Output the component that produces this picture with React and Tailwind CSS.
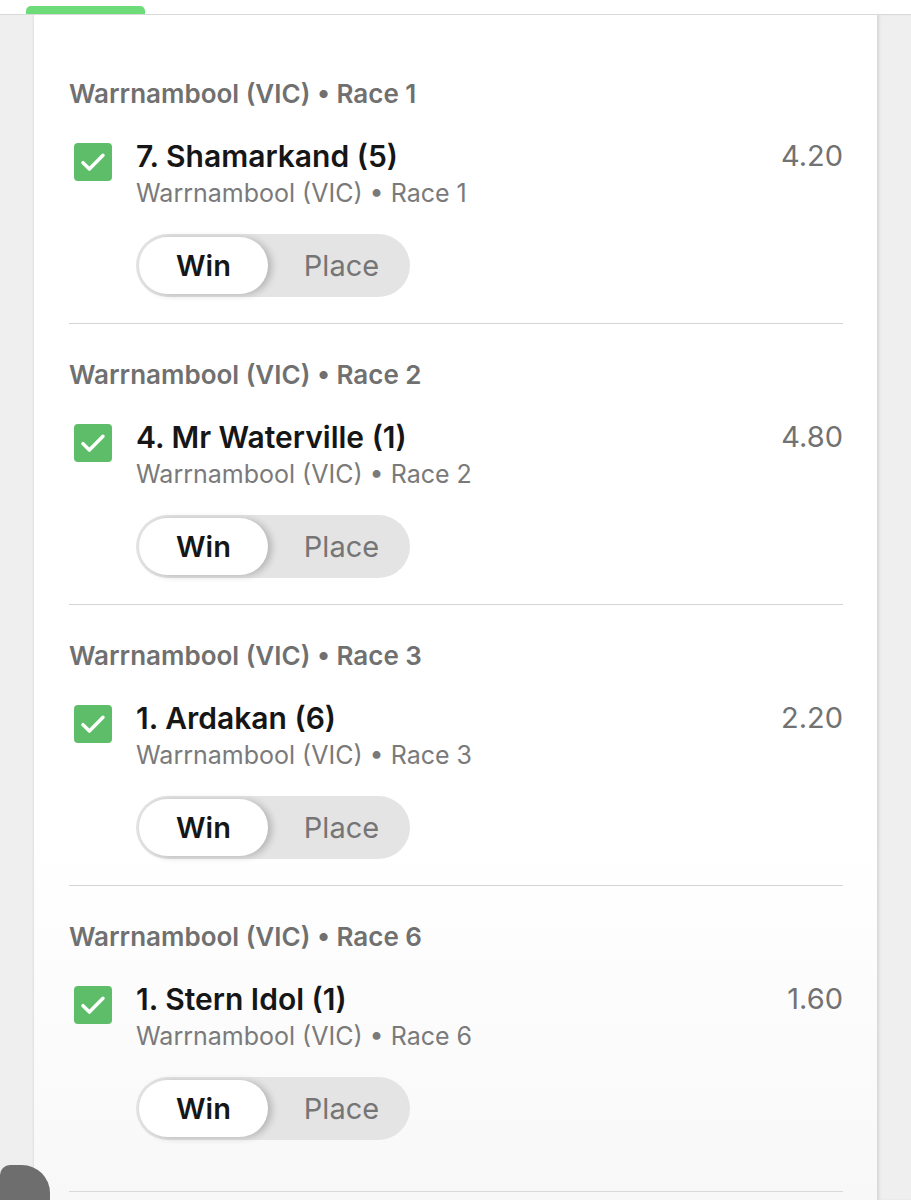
import React from 'react';

const selections = [
  { race: 'Race 1', runner: '7. Shamarkand (5)', price: '4.20' },
  { race: 'Race 2', runner: '4. Mr Waterville (1)', price: '4.80' },
  { race: 'Race 3', runner: '1. Ardakan (6)', price: '2.20' },
  { race: 'Race 6', runner: '1. Stern Idol (1)', price: '1.60' },
];

const CheckBox = () => (
  <div className="mt-[3px] flex h-[38px] w-[38px] shrink-0 items-center justify-center rounded-[4px] bg-[#5dbd68]">
    <svg width="32" height="32" viewBox="0 0 24 24" fill="none">
      <path d="M4.5 12.5l4.8 4.8L19.5 7" stroke="white" strokeWidth="2.6" strokeLinecap="round" strokeLinejoin="round" />
    </svg>
  </div>
);

const BetTypeToggle = () => (
  <div className="relative mt-[26px] flex h-[63px] w-[274px] items-center rounded-full bg-[#e4e4e4] p-[3px]">
    <div className="flex h-[57px] w-[129px] items-center justify-center rounded-full bg-white text-[29px] font-semibold text-[#161616] shadow-[4px_1px_7px_rgba(0,0,0,0.2)]">
      Win
    </div>
    <div className="flex flex-1 items-center justify-center pl-[8px] text-[29px] text-[#757575]">Place</div>
  </div>
);

const Selection = ({ item, first, last }) => (
  <div
    className={`border-b border-[#d4d4d4] ${first ? 'pt-[65px]' : 'pt-[37px]'} ${last ? 'pb-[51px] border-[#d9d9d9]' : 'pb-[26px]'}`}
  >
    <div className="text-[26px] font-semibold leading-[28px] text-[#707070]">
      Warrnambool (VIC) • {item.race}
    </div>
    <div className="mt-[32px] flex items-start">
      <div className="ml-[5px]">
        <CheckBox />
      </div>
      <div className="ml-[24px] flex-1">
        <div className="flex items-start justify-between">
          <div className="text-[30px] font-semibold leading-[32px] text-[#161616]">{item.runner}</div>
          <div className="text-[29px] leading-[32px] text-[#727272]">{item.price}</div>
        </div>
        <div className="mt-[6px] text-[25px] leading-[30px] text-[#7a7a7a]">
          Warrnambool (VIC) • {item.race}
        </div>
        <BetTypeToggle />
      </div>
    </div>
  </div>
);

export default function App() {
  return (
    <div className="relative h-[1200px] w-[911px] overflow-hidden bg-[#efefef] font-['Inter',sans-serif]">
      {/* top strip with active tab indicator */}
      <div className="relative h-[15px] border-b border-[#d9d9d9] bg-white">
        <div className="absolute bottom-0 left-[26px] h-[8px] w-[119px] rounded-t-[5px] bg-[#6ddc78]" />
      </div>

      <div className="flex">
        <div className="w-[34px] shrink-0" />
        <div className="h-[1185px] w-[843px] bg-gradient-to-b from-white from-[70%] to-[#f8f8f8] px-[35px] pr-[34px] shadow-[0_0_3px_rgba(0,0,0,0.12)]">
          {selections.map((item, i) => (
            <Selection key={item.race} item={item} first={i === 0} last={i === selections.length - 1} />
          ))}
        </div>
        <div className="w-[34px] shrink-0 shadow-[inset_3px_0_3px_rgba(0,0,0,0.05)]" />
      </div>

      {/* floating button peeking in from bottom-left */}
      <div className="absolute left-0 top-[1165px] h-[60px] w-[50px] rounded-tl-[10px] rounded-tr-[28px] bg-[#6e6e6e]" />
    </div>
  );
}
